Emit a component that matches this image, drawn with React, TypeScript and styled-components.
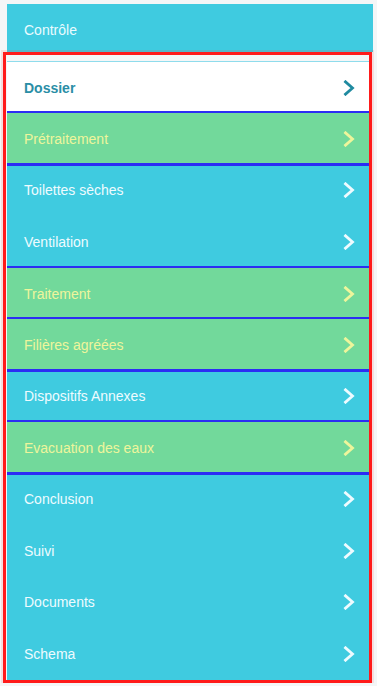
import React from "react";
import styled, { createGlobalStyle } from "styled-components";

const GlobalStyle = createGlobalStyle`
  html, body {
    margin: 0;
    padding: 0;
    background: #f4f6f7;
    font-family: "Liberation Sans", Arial, sans-serif;
  }
`;

type Tone = "active" | "done" | "todo";

const StyledPage = styled.div`
  width: 377px;
  padding: 4px 0 0 3px;
  box-sizing: border-box;
`;

const StyledHeader = styled.div`
  display: flex;
  align-items: center;
  margin-left: 4px;
  width: 366px;
  height: 48px;
  padding: 3px 0 0 17px;
  box-sizing: border-box;
  background-color: #3fcbe0;
  color: #eafbff;
  font-size: 14px;
`;

const StyledFrame = styled.ul`
  list-style: none;
  margin: 0;
  width: 369px;
  padding: 6px 0 0 1px;
  box-sizing: border-box;
  border: 3px solid #ff1a1a;
  box-shadow: 0 0 0 2px rgba(255, 40, 40, 0.12);
`;

const colors: Record<Tone, { bg: string; fg: string }> = {
  active: { bg: "#ffffff", fg: "#2a8ea6" },
  done: { bg: "#72d99b", fg: "#eef59b" },
  todo: { bg: "#3fcbe0", fg: "#eefbff" },
};

const BLUE = "#2b2df4";

const StyledItem = styled.li<{ $tone: Tone }>`
  display: flex;
  align-items: center;
  justify-content: space-between;
  height: ${(p) => (p.$tone === "active" ? "52px" : "51.5px")};
  padding: ${(p) => (p.$tone === "done" ? "3px 14px 0 17px" : "0 14px 0 17px")};
  box-sizing: border-box;
  background-color: ${(p) => colors[p.$tone].bg};
  color: ${(p) => colors[p.$tone].fg};
  font-size: 14px;
  font-weight: ${(p) => (p.$tone === "active" ? 700 : 400)};
  border-top: ${(p) => (p.$tone === "active" ? "1px solid #8fdcec" : "none")};
  border-bottom: ${(p) => (p.$tone === "done" ? `2px solid ${BLUE}` : "none")};
  position: relative;
  z-index: ${(p) => (p.$tone === "done" ? 1 : 0)};
  box-shadow: ${(p) =>
    p.$tone === "done" ? `0 -2px 0 ${BLUE}, 0 1px 0 ${BLUE}` : "none"};
`;

const Chevron = ({ color }: { color: string }) => (
  <svg width="12" height="16" viewBox="0 0 12 16">
    <polyline
      points="2.5,1.8 9.5,8 2.5,14.2"
      fill="none"
      stroke={color}
      strokeWidth="2.8"
      strokeLinecap="square"
    />
  </svg>
);

const steps: { label: string; tone: Tone }[] = [
  { label: "Dossier", tone: "active" },
  { label: "Prétraitement", tone: "done" },
  { label: "Toilettes sèches", tone: "todo" },
  { label: "Ventilation", tone: "todo" },
  { label: "Traitement", tone: "done" },
  { label: "Filières agréées", tone: "done" },
  { label: "Dispositifs Annexes", tone: "todo" },
  { label: "Evacuation des eaux", tone: "done" },
  { label: "Conclusion", tone: "todo" },
  { label: "Suivi", tone: "todo" },
  { label: "Documents", tone: "todo" },
  { label: "Schema", tone: "todo" },
];

export default function App() {
  return (
    <>
      <GlobalStyle />
      <StyledPage>
        <StyledHeader>Contrôle</StyledHeader>
        <StyledFrame>
          {steps.map((s) => (
            <StyledItem key={s.label} $tone={s.tone}>
              <span>{s.label}</span>
              <Chevron color={s.tone === "active" ? "#1f8aa0" : colors[s.tone].fg} />
            </StyledItem>
          ))}
        </StyledFrame>
      </StyledPage>
    </>
  );
}
